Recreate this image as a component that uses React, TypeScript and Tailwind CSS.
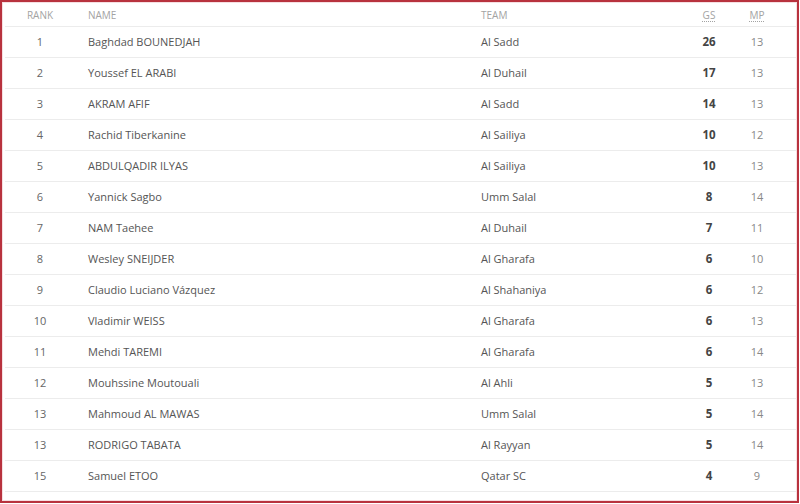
import React from 'react';

// top scorers table
interface Scorer {
  rank: number;
  name: string;
  team: string;
  goals: number;
  played: number;
}

const scorers: Scorer[] = [
  { rank: 1, name: 'Baghdad BOUNEDJAH', team: 'Al Sadd', goals: 26, played: 13 },
  { rank: 2, name: 'Youssef EL ARABI', team: 'Al Duhail', goals: 17, played: 13 },
  { rank: 3, name: 'AKRAM AFIF', team: 'Al Sadd', goals: 14, played: 13 },
  { rank: 4, name: 'Rachid Tiberkanine', team: 'Al Sailiya', goals: 10, played: 12 },
  { rank: 5, name: 'ABDULQADIR ILYAS', team: 'Al Sailiya', goals: 10, played: 13 },
  { rank: 6, name: 'Yannick Sagbo', team: 'Umm Salal', goals: 8, played: 14 },
  { rank: 7, name: 'NAM Taehee', team: 'Al Duhail', goals: 7, played: 11 },
  { rank: 8, name: 'Wesley SNEIJDER', team: 'Al Gharafa', goals: 6, played: 10 },
  { rank: 9, name: 'Claudio Luciano Vázquez', team: 'Al Shahaniya', goals: 6, played: 12 },
  { rank: 10, name: 'Vladimir WEISS', team: 'Al Gharafa', goals: 6, played: 13 },
  { rank: 11, name: 'Mehdi TAREMI', team: 'Al Gharafa', goals: 6, played: 14 },
  { rank: 12, name: 'Mouhssine Moutouali', team: 'Al Ahli', goals: 5, played: 13 },
  { rank: 13, name: 'Mahmoud AL MAWAS', team: 'Umm Salal', goals: 5, played: 14 },
  { rank: 13, name: 'RODRIGO TABATA', team: 'Al Rayyan', goals: 5, played: 14 },
  { rank: 15, name: 'Samuel ETOO', team: 'Qatar SC', goals: 4, played: 9 },
];

const cols = 'grid grid-cols-[70px_394px_217px_46px_50px] items-center';

export default function App() {
  return (
    <div
      className="w-[800px] h-[504px] bg-white"
      style={{ fontFamily: '"Open Sans", "Liberation Sans", sans-serif' }}
    >
      <div className="w-[799px] h-[503px] border-2 border-[#b8323e]">
        <div className="h-full border border-[#f6dfe2] pl-[2px] pt-[1px]">
          {/* Header */}
          <div className={`${cols} h-[23px] border-b border-[#ececec] text-[10px] text-[#a3a3a3] uppercase`}>
            <div className="text-center">Rank</div>
            <div className="pl-[13px]">Name</div>
            <div className="pl-[12px]">Team</div>
            <div className="text-center">
              <abbr className="underline decoration-dotted underline-offset-2" title="Goals scored">
                GS
              </abbr>
            </div>
            <div className="text-center">
              <abbr className="underline decoration-dotted underline-offset-2" title="Matches played">
                MP
              </abbr>
            </div>
          </div>

          {/* Rows */}
          {scorers.map((s, i) => (
            <div
              key={i}
              className={`${cols} h-[31px] border-b border-[#ececec] text-[11px] text-[#555]`}
            >
              <div className="text-center text-[#666]">{s.rank}</div>
              <div className="pl-[13px]">{s.name}</div>
              <div className="pl-[12px]">{s.team}</div>
              <div className="text-center font-bold text-[11.5px] text-[#444]">{s.goals}</div>
              <div className="text-center text-[#888]">{s.played}</div>
            </div>
          ))}
        </div>
      </div>
    </div>
  );
}
